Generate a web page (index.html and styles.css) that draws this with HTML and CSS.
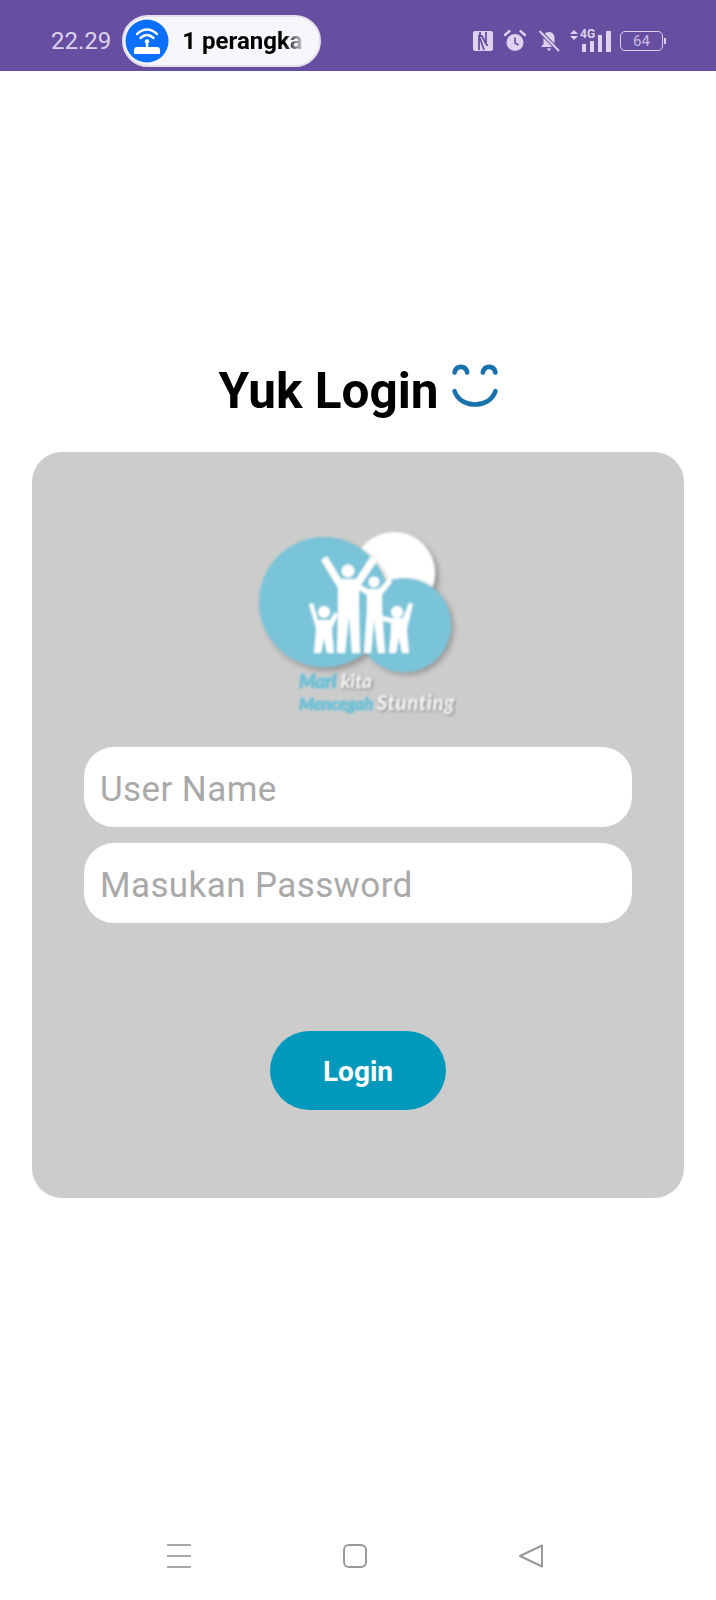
FILE: index.html
```html
<!DOCTYPE html>
<html>
<head>
  <title>Yuk Login</title>
  <link rel="stylesheet" href="styles.css">
</head>
<body>
  <div class="status-bar">
    <div class="status-left">
      <span class="time">22.29</span>
      <div class="hotspot">
        <svg class="hotspot-icon" viewBox="0 0 44 44">
          <circle cx="22" cy="22" r="21.5" fill="#0a6ffb"/>
          <g fill="none" stroke="#fff" stroke-width="2.4" stroke-linecap="round">
            <path d="M12 15 Q22 6 32 15"/>
            <path d="M15.5 19 Q22 13 28.500 19"/>
          </g>
          <circle cx="22" cy="22.500" r="2.200" fill="#fff"/>
          <rect x="20.800" y="23" width="2.400" height="5" fill="#fff"/>
          <path d="M12 28 H32 Q35 28 35 31 V35 H9 V31 Q9 28 12 28 Z" fill="#fff"/>
        </svg>
        <span class="hotspot-text">1 perangka</span>
      </div>
    </div>
    <div class="status-right">
      <svg class="ic-nfc" viewBox="0 0 20 20">
        <rect width="20" height="20" rx="2" fill="#ddd3ee"/>
        <path d="M6 19 V5 H9 L13 13 V1 M7 1 V5 M14 15 V13 M11 19 L7 7" fill="none" stroke="#674ea0" stroke-width="1.800"/>
      </svg>
      <svg class="ic-alarm" viewBox="0 0 22 22">
        <circle cx="11" cy="12.500" r="8.500" fill="#ddd3ee"/>
        <path d="M11 7.500 V13 L14.500 15" fill="none" stroke="#674ea0" stroke-width="1.600"/>
        <path d="M1 5 L5.500 1.200 M21 5 L16.500 1.200" stroke="#ddd3ee" stroke-width="2.400" stroke-linecap="round"/>
      </svg>
      <svg class="ic-bell" viewBox="0 0 22 22">
        <path d="M11 2 C7 2 5.500 5 5.500 8 V14 L3 17 H19 L16.500 14 V8 C16.500 5 15 2 11 2 Z" fill="#ddd3ee"/>
        <path d="M8.500 18.500 H13.500 L11 21 Z" fill="#ddd3ee"/>
        <path d="M1.500 1 L21 21" stroke="#674ea0" stroke-width="4"/>
        <path d="M1.500 1 L21 21" stroke="#ddd3ee" stroke-width="1.800"/>
      </svg>
      <div class="signal">
        <span class="net-arrows">
          <i class="arrow-up"></i>
          <i class="arrow-down"></i>
        </span>
        <span class="net-label">4G</span>
        <span class="bar bar-1"></span>
        <span class="bar bar-2"></span>
        <span class="bar bar-3"></span>
        <span class="bar bar-4"></span>
      </div>
      <div class="battery">
        <span class="battery-body">64</span>
        <span class="battery-tip"></span>
      </div>
    </div>
  </div>

  <div class="main">
    <h1 class="title">Yuk Login
      <svg class="smile" viewBox="0 0 44 44">
        <g fill="none" stroke="#1a72ad" stroke-width="4.400" stroke-linecap="round">
          <path d="M2.500 9 C4 2 13 2 14.500 9"/>
          <path d="M29.500 9 C31 2 40 2 41.500 9"/>
          <path d="M2.500 27 C8 44 36 44 41.500 27"/>
        </g>
      </svg>
    </h1>

    <div class="card">
      <svg class="logo" viewBox="0 0 230 205">
        <defs>
          <filter id="soft" x="-20%" y="-20%" width="140%" height="140%">
            <feGaussianBlur stdDeviation="0.800"/>
          </filter>
          <filter id="shadow" x="-20%" y="-20%" width="140%" height="140%">
            <feGaussianBlur stdDeviation="2.500"/>
          </filter>
          <clipPath id="top-cut">
            <rect x="0" y="12" width="230" height="193"/>
          </clipPath>
        </defs>
        <g filter="url(#soft)">
          <g clip-path="url(#top-cut)">
            <circle cx="157" cy="57" r="41" fill="#777" opacity="0.600" filter="url(#shadow)"/>
            <circle cx="153" cy="53" r="41" fill="#fff"/>
          </g>
          <circle cx="86" cy="86" r="65" fill="#777" opacity="0.600" filter="url(#shadow)"/>
          <circle cx="83" cy="82" r="65" fill="#79c4d8"/>
          <circle cx="166" cy="108" r="47" fill="#777" opacity="0.600" filter="url(#shadow)"/>
          <circle cx="163" cy="105" r="47" fill="#79c4d8"/>
          <g fill="#fff">
            <circle cx="107" cy="51" r="6.500"/>
            <circle cx="133" cy="62" r="5.500"/>
            <circle cx="83" cy="92" r="6"/>
            <circle cx="156" cy="92" r="6"/>
            <path d="M80 40 L86 36 L100 59 H115 L130 36 L136 41 L118 68 V88 L119 133 H111 L108 96 L104 133 H96 L97 88 V68 Z"/>
            <path d="M118 64 L127 69 H138 L148 58 L151 62 L141 75 V90 L144 133 H137 L133 100 L130 133 H123 L126 90 V75 L118 70 Z"/>
            <path d="M68 84 L72 83 L77 100 H89 L94 92 L97 95 L91 108 V112 L93 133 H86 L83 118 L80 133 H73 L75 112 V108 Z"/>
            <path d="M168 83 L172 84 L166 108 V112 L168 133 H161 L158 118 L155 133 H148 L150 112 V103 L135 99 L135 94 L150 98 H162 Z"/>
          </g>
          <g class="logo-text">
            <text class="logo-blue" x="58" y="168">Mari</text>
            <text class="logo-white" x="100" y="168">kita</text>
            <text class="logo-blue logo-small" x="58" y="190">Mencegah</text>
            <text class="logo-white logo-wide" x="136" y="190">Stunting</text>
          </g>
        </g>
      </svg>

      <form class="login-form">
        <input class="field" type="text" placeholder="User Name">
        <input class="field" type="password" placeholder="Masukan Password">
        <button class="login-btn" type="button">Login</button>
      </form>
    </div>
  </div>

  <div class="nav-bar">
    <svg class="nav-icon" viewBox="0 0 26 26">
      <path d="M1 2 H25 M1 13 H25 M1 24 H25" stroke="#a8a8a8" stroke-width="2.200"/>
    </svg>
    <svg class="nav-icon" viewBox="0 0 26 26">
      <rect x="2" y="2" width="22" height="22" rx="5" fill="none" stroke="#999999" stroke-width="2"/>
    </svg>
    <svg class="nav-icon" viewBox="0 0 26 26">
      <path d="M24 2.500 V23.500 L2 13 Z" fill="none" stroke="#999999" stroke-width="2" stroke-linejoin="round"/>
    </svg>
  </div>
</body>
</html>
```

FILE: styles.css
```css
* {
  box-sizing: border-box;
}
body {
  margin: 0;
  height: 1600px;
  display: flex;
  flex-direction: column;
  font-family: Roboto, "Liberation Sans", sans-serif;
  background-color: #ffffff;
}

/* status bar */
.status-bar {
  height: 71px;
  flex-shrink: 0;
  background-color: #674ea0;
  display: flex;
  justify-content: space-between;
  align-items: center;
  padding: 0 50px 0 51px;
  color: #ddd3ee;
}
.status-left {
  display: flex;
  align-items: center;
  gap: 11px;
  margin-top: 11px;
}
.time {
  font-size: 24px;
}
.hotspot {
  width: 199px;
  height: 52px;
  background-color: #f7f7fb;
  border: 2px solid #e4e0ee;
  border-radius: 26px;
  display: flex;
  align-items: center;
  padding-left: 1px;
}
.hotspot-icon {
  width: 44px;
  height: 44px;
  flex-shrink: 0;
}
.hotspot-text {
  margin-left: 13px;
  white-space: nowrap;
  color: #000000;
  font-size: 24px;
  font-weight: 700;
  -webkit-mask-image: linear-gradient(to right, #000 84%, rgba(0,0,0,0.15) 100%);
  mask-image: linear-gradient(to right, #000 84%, rgba(0,0,0,0.15) 100%);
}
.status-right {
  display: flex;
  align-items: center;
  margin-top: 10px;
}
.ic-nfc {
  width: 20px;
  height: 20px;
}
.ic-alarm {
  width: 22px;
  height: 22px;
  margin-left: 11px;
}
.ic-bell {
  width: 22px;
  height: 22px;
  margin-left: 12px;
}
.signal {
  position: relative;
  width: 41px;
  height: 22px;
  margin-left: 10px;
  display: flex;
  align-items: flex-end;
  justify-content: flex-end;
  gap: 4px;
}
.bar {
  display: block;
  width: 4px;
  background-color: #ddd3ee;
}
.bar-1 {
  height: 8px;
}
.bar-2 {
  height: 11px;
}
.bar-3 {
  height: 17px;
}
.bar-4 {
  width: 5px;
  height: 21px;
}
.net-label {
  position: absolute;
  left: 10px;
  top: -3px;
  font-size: 12px;
  font-weight: 700;
}
.net-arrows {
  position: absolute;
  left: 0;
  top: 0;
  display: flex;
  flex-direction: column;
  gap: 2px;
}
.arrow-up {
  border-left: 4px solid transparent;
  border-right: 4px solid transparent;
  border-bottom: 4px solid #ddd3ee;
}
.arrow-down {
  border-left: 4px solid transparent;
  border-right: 4px solid transparent;
  border-top: 4px solid #ddd3ee;
}
.battery {
  display: flex;
  align-items: center;
  margin-left: 9px;
}
.battery-body {
  width: 43px;
  height: 20px;
  border: 1.500px solid #ddd3ee;
  border-radius: 5px;
  font-size: 15px;
  line-height: 18px;
  text-align: center;
  color: #c9bce3;
}
.battery-tip {
  width: 2px;
  height: 6px;
  margin-left: 1px;
  background-color: #ddd3ee;
}

/* main content */
.main {
  flex: 1;
  display: flex;
  flex-direction: column;
  align-items: center;
  padding: 285px 32px 0;
}
.title {
  margin: 0;
  height: 70px;
  display: flex;
  align-items: center;
  gap: 13px;
  font-size: 49.500px;
  line-height: 70px;
  font-weight: 700;
  color: #000000;
}
.smile {
  width: 46px;
  height: 46px;
  margin-top: -11px;
  filter: blur(0.4px);
}
.card {
  width: 652px;
  height: 746px;
  margin-top: 26px;
  background-color: #cccccc;
  border-radius: 30px;
  padding: 68px 52px 0;
  display: flex;
  flex-direction: column;
  align-items: center;
}
.logo {
  width: 230px;
  height: 205px;
  flex-shrink: 0;
  margin-left: -4px;
}
.logo-text {
  font-family: Lato, sans-serif;
  font-size: 19px;
  font-weight: 700;
  font-style: italic;
}
.logo-blue {
  fill: #6fc0d6;
  stroke: #6fc0d6;
  stroke-width: 1.2px;
}
.logo-small {
  font-size: 17px;
}
.logo-white {
  fill: #ffffff;
  filter: drop-shadow(1px 1px 1px #555555);
}
.logo-wide {
  font-size: 20px;
  letter-spacing: 0.8px;
}
.login-form {
  width: 100%;
  margin-top: 22px;
  display: flex;
  flex-direction: column;
  align-items: center;
}
.field {
  width: 100%;
  height: 80px;
  margin-bottom: 16px;
  padding: 5px 16px 0;
  border: none;
  border-radius: 30px;
  background-color: #ffffff;
  color: #333333;
  font-family: inherit;
  font-size: 35px;
  outline: none;
}
.field::placeholder {
  color: #a9a9a9;
  letter-spacing: 0.4px;
}
.login-btn {
  width: 176px;
  height: 79px;
  margin-top: 92px;
  padding-top: 2px;
  border: none;
  border-radius: 40px;
  background-color: #0099bb;
  color: #ffffff;
  font-family: inherit;
  font-size: 28px;
  font-weight: 700;
  cursor: pointer;
}

/* bottom navigation */
.nav-bar {
  height: 78px;
  flex-shrink: 0;
  display: flex;
  justify-content: space-between;
  align-items: flex-start;
  padding: 21px 172px 0 166px;
}
.nav-icon {
  width: 26px;
  height: 26px;
}
```
